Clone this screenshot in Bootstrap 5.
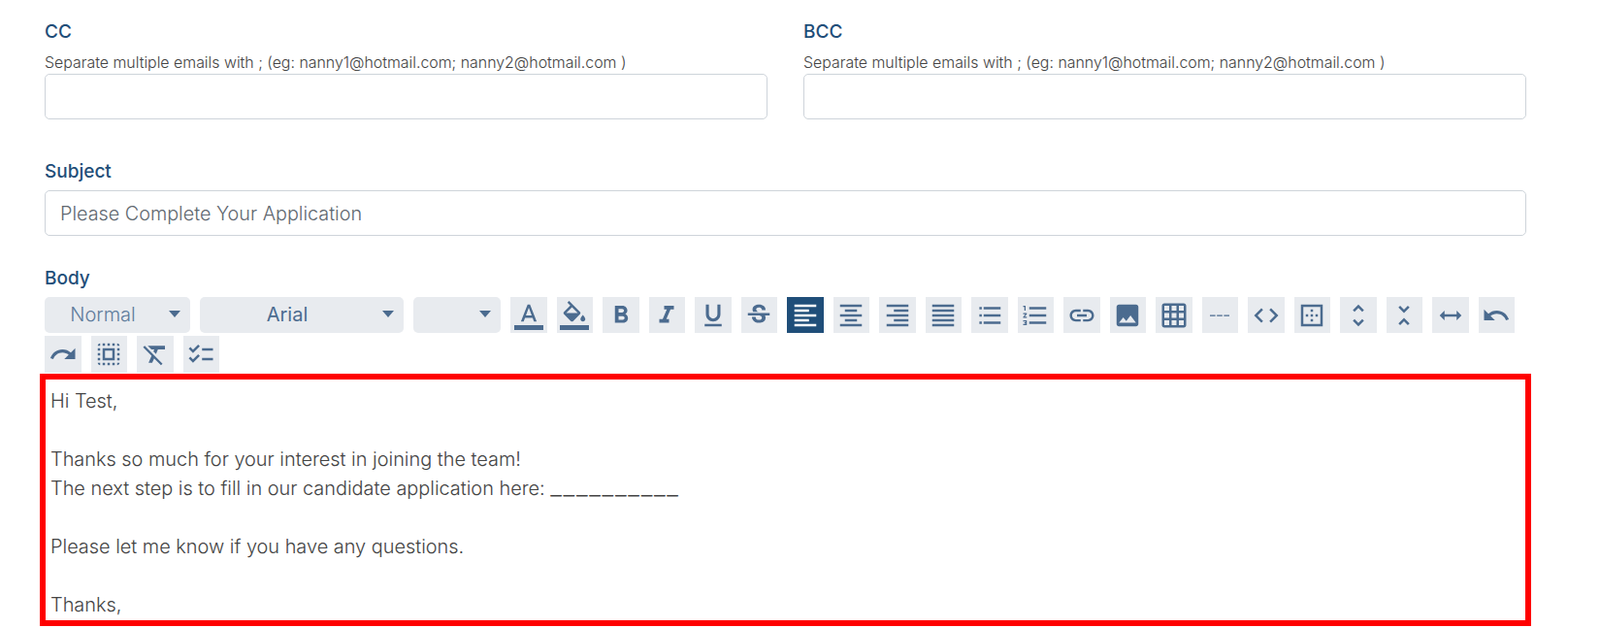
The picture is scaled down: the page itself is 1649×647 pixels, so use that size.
<!DOCTYPE html>
<html lang="en">
<head>
  <meta charset="UTF-8" />
  <meta name="viewport" content="width=device-width, initial-scale=1.0" />
  <title>Send Email</title>
  <link href="https://cdn.jsdelivr.net/npm/bootstrap@5.3.1/dist/css/bootstrap.min.css" rel="stylesheet" />
  <style>
    body { font-family: "Inter", "Liberation Sans", sans-serif; font-weight: 300; color: #4a4a4a; overflow: hidden; }
    .mail-form { padding: 20px 76px 0 46px; }
    .mail-form .row { --bs-gutter-x: 37px; }
    .field-label { display: block; color: #1f4e79; font-size: 19px; font-weight: 500; line-height: 25px; margin: 0; }
    .field-help { font-size: 15.9px; line-height: 20px; margin: 10px 0 1px; color: #444; }
    .mail-input { height: 47px; border-color: #ced4da; border-radius: 5px; font-size: 19.8px; font-weight: 300; padding: 0 15px; color: #555; }
    .mail-input::placeholder { color: #5f6870; }
    .subject-field { margin-top: 41px; }
    .subject-field .field-label { margin-bottom: 7px; }
    .body-field { margin-top: 31px; }
    .editor-bar { display: flex; flex-wrap: wrap; column-gap: 10px; row-gap: 3px; margin-top: 7px; }
    .bar-select { display: flex; align-items: center; height: 37px; padding: 0 0 2px; background: #e8ebef; border: 0; border-radius: 5px; color: #4b6b8f; font-size: 20px; font-weight: 300; }
    .bar-select span { flex: 1 1 auto; text-align: center; padding-right: 8px; }
    .bar-select::after { content: ""; margin: 0 10px 0 0; border-left: 6.5px solid transparent; border-right: 6.5px solid transparent; border-top: 7px solid #4b6b8f; }
    .sel-style { width: 150px; color: #5f7c9c; }
    .sel-font { width: 210px; font-weight: 400; }
    .sel-size { width: 90px; }
    .bar-btn { display: flex; align-items: center; justify-content: center; width: 37.5px; height: 37px; padding: 0; background: #e8ebef; border: 0; border-radius: 0; }
    .bar-btn svg { width: 30px; height: 30px; fill: #4b6b8f; }
    .bar-btn.is-on { background: #1f4e79; }
    .bar-btn.is-on svg { fill: #fff; }
    .editor-bar > .bar-btn:nth-last-child(-n+4) { height: 38px; }
    .editor-box { height: 260px; margin: 1px 0 0 -5px; width: 1537px; border: 6px solid #f00; overflow: hidden; padding: 7px 5px 0; font-size: 19.9px; line-height: 30px; color: #444; }
    .blank-line { font-size: 26px; line-height: 0; letter-spacing: 1.7px; }
  </style>
</head>
<body>
<form class="mail-form">
  <div class="row">
    <div class="col-6">
      <label class="field-label" for="inputCc">CC</label>
      <p class="field-help">Separate multiple emails with ; (eg: nanny1@hotmail.com; nanny2@hotmail.com )</p>
      <input type="text" class="form-control mail-input" id="inputCc" />
    </div>
    <div class="col-6">
      <label class="field-label" for="inputBcc">BCC</label>
      <p class="field-help">Separate multiple emails with ; (eg: nanny1@hotmail.com; nanny2@hotmail.com )</p>
      <input type="text" class="form-control mail-input" id="inputBcc" />
    </div>
  </div>
  <div class="subject-field">
    <label class="field-label" for="inputSubject">Subject</label>
    <input type="text" class="form-control mail-input" id="inputSubject" placeholder="Please Complete Your Application" />
  </div>
  <div class="body-field">
    <div class="field-label">Body</div>
    <div class="editor-bar">
      <button type="button" class="btn bar-select sel-style"><span>Normal</span></button>
      <button type="button" class="btn bar-select sel-font"><span>Arial</span></button>
      <button type="button" class="btn bar-select sel-size"><span></span></button>
      <button type="button" class="btn bar-btn"><svg viewBox="0 0 24 24"><path d="M11 3L5.5 17h2.25l1.12-3h6.25l1.12 3h2.25L13 3h-2zm-1.38 9L12 5.67 14.38 12H9.62z"/><path d="M0 20h24v4H0z"/></svg></button>
      <button type="button" class="btn bar-btn"><svg viewBox="0 0 24 24"><path d="M16.56 8.94L7.62 0 6.21 1.41l2.38 2.38-5.15 5.15c-.59.59-.59 1.54 0 2.12l5.5 5.5c.29.29.68.44 1.06.44s.77-.15 1.06-.44l5.5-5.5c.59-.58.59-1.53 0-2.12zM5.21 10L10 5.21 14.79 10H5.21zM19 11.5s-2 2.17-2 3.5c0 1.1.9 2 2 2s2-.9 2-2c0-1.33-2-3.5-2-3.5z"/><path d="M0 20h24v4H0z"/></svg></button>
      <button type="button" class="btn bar-btn"><svg viewBox="0 0 24 24"><path d="M15.6 10.79c.97-.67 1.65-1.77 1.65-2.79 0-2.26-1.75-4-4-4H7v14h7.04c2.09 0 3.71-1.7 3.71-3.79 0-1.52-.86-2.82-2.15-3.42zM10 6.5h3c.83 0 1.5.67 1.5 1.5s-.67 1.5-1.5 1.5h-3v-3zm3.5 9H10v-3h3.5c.83 0 1.5.67 1.5 1.5s-.67 1.5-1.5 1.5z"/></svg></button>
      <button type="button" class="btn bar-btn"><svg viewBox="0 0 24 24"><path d="M10 4v3h2.21l-3.42 8H6v3h8v-3h-2.21l3.42-8H18V4z"/></svg></button>
      <button type="button" class="btn bar-btn"><svg viewBox="0 0 24 24"><path d="M12 17c3.31 0 6-2.69 6-6V3h-2.5v8c0 1.93-1.57 3.5-3.5 3.5S8.5 12.93 8.5 11V3H6v8c0 3.31 2.69 6 6 6zm-7 2v2h14v-2H5z"/></svg></button>
      <button type="button" class="btn bar-btn"><svg viewBox="0 0 24 24"><path d="M6.85 7.08C6.85 4.37 9.45 3 12.24 3c1.64 0 3 .49 3.9 1.28.77.65 1.46 1.73 1.46 3.24h-3.01c0-.31-.05-.59-.15-.85-.29-.86-1.2-1.28-2.25-1.28-1.86 0-2.34 1.02-2.34 1.7 0 .48.25.88.74 1.21.38.25.77.48 1.41.7H7.39c-.21-.34-.54-.89-.54-1.92zM21 12v-2H3v2h9.62c1.15.45 1.96.75 1.96 1.97 0 1-.81 1.67-2.28 1.67-1.54 0-2.93-.54-2.93-2.51H6.4c0 .55.08 1.13.24 1.58.81 2.29 3.29 3.3 5.67 3.3 2.27 0 5.3-.89 5.3-4.05 0-.3-.01-1.16-.48-1.96H21z"/></svg></button>
      <button type="button" class="btn bar-btn is-on"><svg viewBox="0 0 24 24"><path d="M3 3h18v2H3zM3 7h12v2H3zM3 11h18v2H3zM3 15h12v2H3zM3 19h18v2H3z"/></svg></button>
      <button type="button" class="btn bar-btn"><svg viewBox="0 0 24 24"><path d="M3 3h18v2H3zM7 7h10v2H7zM3 11h18v2H3zM7 15h10v2H7zM3 19h18v2H3z"/></svg></button>
      <button type="button" class="btn bar-btn"><svg viewBox="0 0 24 24"><path d="M3 3h18v2H3zM9 7h12v2H9zM3 11h18v2H3zM9 15h12v2H9zM3 19h18v2H3z"/></svg></button>
      <button type="button" class="btn bar-btn"><svg viewBox="0 0 24 24"><path d="M3 3h18v2H3zM3 7h18v2H3zM3 11h18v2H3zM3 15h18v2H3zM3 19h18v2H3z"/></svg></button>
      <button type="button" class="btn bar-btn"><svg viewBox="0 0 24 24"><path d="M3.5 5h2v2h-2zM3.5 11h2v2h-2zM3.5 17h2v2h-2zM7 19h14v-2H7v2zm0-6h14v-2H7v2zm0-8v2h14V5H7z"/></svg></button>
      <button type="button" class="btn bar-btn"><svg viewBox="0 0 24 24"><path d="M2 17h2v.5H3v1h1v.5H2v1h3v-4H2v1zm1-9h1V4H2v1h1v3zm-1 3h1.8L2 13.1v.9h3v-1H3.2L5 10.9V10H2v1zm5-6v2h14V5H7zm0 14h14v-2H7v2zm0-6h14v-2H7v2z"/></svg></button>
      <button type="button" class="btn bar-btn"><svg viewBox="0 0 24 24"><path d="M3.9 12c0-1.71 1.39-3.1 3.1-3.1h4V7H7c-2.76 0-5 2.24-5 5s2.24 5 5 5h4v-1.9H7c-1.71 0-3.1-1.39-3.1-3.1zM8 13h8v-2H8v2zm9-6h-4v1.9h4c1.71 0 3.1 1.39 3.1 3.1s-1.39 3.1-3.1 3.1h-4V17h4c2.76 0 5-2.24 5-5s-2.24-5-5-5z"/></svg></button>
      <button type="button" class="btn bar-btn"><svg viewBox="0 0 24 24"><path d="M21 19V5c0-1.1-.9-2-2-2H5c-1.1 0-2 .9-2 2v14c0 1.1.9 2 2 2h14c1.1 0 2-.9 2-2zM8.5 13.5l2.5 3.01L14.5 12l4.5 6H5l3.5-4.5z"/></svg></button>
      <button type="button" class="btn bar-btn"><svg viewBox="0 0 24 24"><path d="M20 2H4c-1.1 0-2 .9-2 2v16c0 1.1.9 2 2 2h16c1.1 0 2-.9 2-2V4c0-1.1-.9-2-2-2zM8 20H4v-4h4v4zm0-6H4v-4h4v4zm0-6H4V4h4v4zm6 12h-4v-4h4v4zm0-6h-4v-4h4v4zm0-6h-4V4h4v4zm6 12h-4v-4h4v4zm0-6h-4v-4h4v4zm0-6h-4V4h4v4z"/></svg></button>
      <button type="button" class="btn bar-btn"><svg viewBox="0 0 24 24"><path d="M4 11.5h4.5v1H4zM9.75 11.5h4.5v1h-4.5zM15.5 11.5H20v1h-4.5z"/></svg></button>
      <button type="button" class="btn bar-btn"><svg viewBox="0 0 24 24"><path d="M9.4 16.6L4.8 12l4.6-4.6L8 6l-6 6 6 6 1.4-1.4zm5.2 0l4.6-4.6-4.6-4.6L16 6l6 6-6 6-1.4-1.4z"/></svg></button>
      <button type="button" class="btn bar-btn"><svg viewBox="0 0 24 24"><path d="M13 7h-2v2h2V7zm0 4h-2v2h2v-2zm4 0h-2v2h2v-2zM3 3v18h18V3H3zm16 16H5V5h14v14zm-6-4h-2v2h2v-2zm-4-4H7v2h2v-2z"/></svg></button>
      <button type="button" class="btn bar-btn"><svg viewBox="0 0 24 24"><path d="M12 5.83L15.17 9l1.41-1.41L12 3 7.41 7.59 8.83 9 12 5.83zm0 12.34L8.83 15l-1.41 1.41L12 21l4.59-4.59L15.17 15 12 18.17z"/></svg></button>
      <button type="button" class="btn bar-btn"><svg viewBox="0 0 24 24"><path d="M7.41 18.59L8.83 20 12 16.83 15.17 20l1.41-1.41L12 14l-4.59 4.59zm9.18-13.18L15.17 4 12 7.17 8.83 4 7.41 5.41 12 10l4.59-4.59z"/></svg></button>
      <button type="button" class="btn bar-btn"><svg viewBox="0 0 24 24"><path d="M21 12l-4-4v3H7V8l-4 4 4 4v-3h10v3z"/></svg></button>
      <button type="button" class="btn bar-btn"><svg viewBox="0 0 24 24"><path d="M12.5 8c-2.65 0-5.05.99-6.9 2.6L2 7v9h9l-3.62-3.62c1.39-1.16 3.16-1.88 5.12-1.88 3.54 0 6.55 2.31 7.6 5.5l2.37-.78C21.08 11.03 17.15 8 12.5 8z"/></svg></button>
      <button type="button" class="btn bar-btn"><svg viewBox="0 0 24 24"><path d="M18.4 10.6C16.55 8.99 14.15 8 11.5 8c-4.65 0-8.58 3.03-9.96 7.22L3.9 16c1.05-3.19 4.05-5.5 7.6-5.5 1.95 0 3.73.72 5.12 1.88L13 16h9V7l-3.6 3.6z"/></svg></button>
      <button type="button" class="btn bar-btn"><svg viewBox="0 0 24 24"><path d="M3 5h2V3c-1.1 0-2 .9-2 2zm0 8h2v-2H3v2zm4 8h2v-2H7v2zM3 9h2V7H3v2zm10-6h-2v2h2V3zm6 0v2h2c0-1.1-.9-2-2-2zM5 21v-2H3c0 1.1.9 2 2 2zm-2-4h2v-2H3v2zM9 3H7v2h2V3zm2 18h2v-2h-2v2zm8-8h2v-2h-2v2zm0 8c1.1 0 2-.9 2-2h-2v2zm0-12h2V7h-2v2zm0 8h2v-2h-2v2zm-4 4h2v-2h-2v2zm0-16h2V3h-2v2zM7 17h10V7H7v10zm2-8h6v6H9V9z"/></svg></button>
      <button type="button" class="btn bar-btn"><svg viewBox="0 0 24 24"><path d="M3.27 5L2 6.27l6.97 6.97L6.5 19h3l1.57-3.66L16.73 21 18 19.73 3.55 5.27 3.27 5zM6 5v.18L8.82 8h2.4l-.72 1.68 2.1 2.1L14.21 8H20V5H6z"/></svg></button>
      <button type="button" class="btn bar-btn"><svg viewBox="0 0 24 24"><path d="M22 7h-9v2h9V7zm0 8h-9v2h9v-2zM5.54 11L2 7.46l1.41-1.41 2.12 2.12 4.24-4.24 1.41 1.41L5.54 11zm0 8L2 15.46l1.41-1.41 2.12 2.12 4.24-4.24 1.41 1.41L5.54 19z"/></svg></button>
    </div>
    <div class="editor-box" contenteditable="true">
      <div>Hi Test,</div>
      <div><br /></div>
      <div>Thanks so much for your interest in joining the team!</div>
      <div>The next step is to fill in our candidate application here: <span class="blank-line">__________</span></div>
      <div><br /></div>
      <div>Please let me know if you have any questions.</div>
      <div><br /></div>
      <div>Thanks,</div>
    </div>
  </div>
</form>
<script src="https://cdn.jsdelivr.net/npm/bootstrap@5.3.1/dist/js/bootstrap.bundle.min.js"></script>
</body>
</html>
